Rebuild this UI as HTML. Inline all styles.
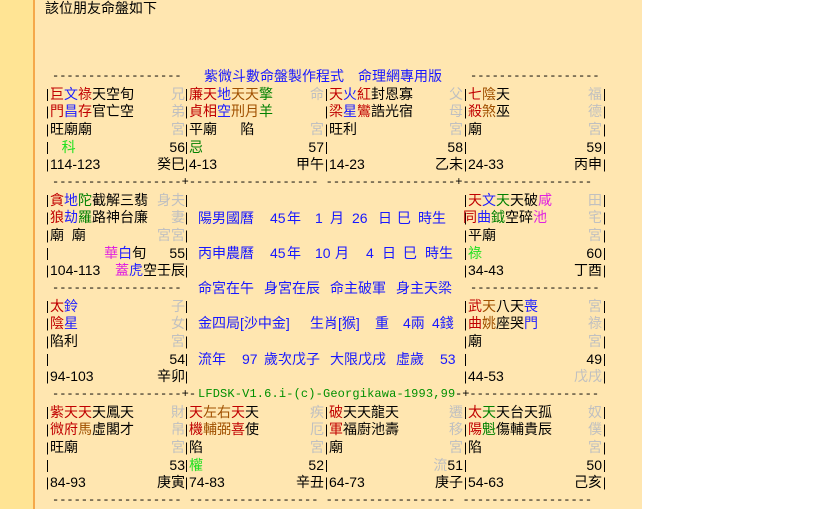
<!DOCTYPE html>
<html><head><meta charset="utf-8">
<style>
html,body{margin:0;padding:0;width:819px;height:509px;overflow:hidden;background:#fff;}
body{position:relative;font-family:"Liberation Sans","Noto Sans CJK TC",sans-serif;font-size:14px;color:#000;}
#strip{position:absolute;left:0;top:0;width:33px;height:509px;background:#FFE494;border-right:2px solid #F5A84A;}
#main{position:absolute;left:35px;top:0;width:607px;height:509px;background:#FFE6B0;}
.a{position:absolute;white-space:pre;line-height:17.67px;height:17.67px;}
.m{font-family:"Liberation Mono",monospace;font-size:12px;}
.cell{position:absolute;}
.cell .l{display:flex;justify-content:space-between;height:17.67px;line-height:17.67px;white-space:pre;}
.bar{position:absolute;width:1px;height:88.35px;background:repeating-linear-gradient(to bottom,transparent 0,transparent 3px,#000 3px,#000 15px,transparent 15px,transparent 17.67px);}
.r{color:#c00000}.b{color:#2020ff}.o{color:#a05000}.g{color:#008000}.lg{color:#20e020}.gy{color:#c0c0c0}.mg{color:#e020e0}
.bl{color:#1818ff}.gr{color:#009000}
</style></head><body>
<div id="strip"></div>
<div id="main"></div>
<div class="a" style="left:45px;top:0px;">該位朋友命盤如下</div>

<div class="a m" style="left:52px;top:68px;">------------------</div>
<div class="a bl" style="left:204px;top:68px;">紫微斗數命盤製作程式</div>
<div class="a bl" style="left:358px;top:68px;">命理網專用版</div>
<div class="a m" style="left:470px;top:68px;">------------------</div>

<div class="a m" style="left:52px;top:174px;">------------------+------------------ ------------------+------------------</div>

<div class="a m" style="left:52px;top:280px;">------------------</div>
<div class="a bl" style="left:198px;top:280px;">命宮在午</div>
<div class="a bl" style="left:264px;top:280px;">身宮在辰</div>
<div class="a bl" style="left:330px;top:280px;">命主破軍</div>
<div class="a bl" style="left:396px;top:280px;">身主天梁</div>
<div class="a m" style="left:470px;top:280px;">------------------</div>

<div class="a m" style="left:52px;top:386px;">------------------+-</div>
<div class="a m gr" style="left:198px;top:386px;letter-spacing:0.15px;">LFDSK-V1.6.i-(c)-Georgikawa-1993,99</div>
<div class="a m" style="left:455px;top:386px;">-+------------------</div>

<div class="a m" style="left:52px;top:492px;">------------------ ------------------ ------------------ ------------------</div>

<div class="a bl" style="left:198px;top:209.7px;">陽男國曆</div>
<div class="a bl" style="left:270px;top:209.7px;">45</div>
<div class="a bl" style="left:287px;top:209.7px;">年</div>
<div class="a bl" style="left:315px;top:209.7px;">1</div>
<div class="a bl" style="left:330px;top:209.7px;">月</div>
<div class="a bl" style="left:352px;top:209.7px;">26</div>
<div class="a bl" style="left:378px;top:209.7px;">日</div>
<div class="a bl" style="left:397px;top:209.7px;">巳</div>
<div class="a bl" style="left:418px;top:209.7px;">時生</div>

<div class="a bl" style="left:198px;top:245px;">丙申農曆</div>
<div class="a bl" style="left:270px;top:245px;">45</div>
<div class="a bl" style="left:287px;top:245px;">年</div>
<div class="a bl" style="left:315px;top:245px;">10</div>
<div class="a bl" style="left:335px;top:245px;">月</div>
<div class="a bl" style="left:366px;top:245px;">4</div>
<div class="a bl" style="left:382px;top:245px;">日</div>
<div class="a bl" style="left:403px;top:245px;">巳</div>
<div class="a bl" style="left:425px;top:245px;">時生</div>

<div class="a bl" style="left:198px;top:315.4px;">金四局[沙中金]</div>
<div class="a bl" style="left:310px;top:315.4px;">生肖[猴]</div>
<div class="a bl" style="left:375px;top:315.4px;">重</div>
<div class="a bl" style="left:403px;top:315.4px;">4兩</div>
<div class="a bl" style="left:432px;top:315.4px;">4錢</div>

<div class="a bl" style="left:198px;top:350.7px;">流年</div>
<div class="a bl" style="left:242px;top:350.7px;">97</div>
<div class="a bl" style="left:264px;top:350.7px;">歲次戊子</div>
<div class="a bl" style="left:330px;top:350.7px;">大限戊戌</div>
<div class="a bl" style="left:396px;top:350.7px;">虛歲</div>
<div class="a bl" style="left:440px;top:350.7px;">53</div>

<div class="bar" style="left:47px;top:85.7px"></div>
<div class="bar" style="left:186px;top:85.7px"></div>
<div class="bar" style="left:326px;top:85.7px"></div>
<div class="bar" style="left:465px;top:85.7px"></div>
<div class="bar" style="left:604px;top:85.7px"></div>
<div class="bar" style="left:47px;top:191.7px"></div>
<div class="bar" style="left:186px;top:191.7px"></div>
<div class="bar" style="left:465px;top:191.7px"></div>
<div class="bar" style="left:604px;top:191.7px"></div>
<div class="bar" style="left:47px;top:297.7px"></div>
<div class="bar" style="left:186px;top:297.7px"></div>
<div class="bar" style="left:465px;top:297.7px"></div>
<div class="bar" style="left:604px;top:297.7px"></div>
<div class="bar" style="left:47px;top:403.7px"></div>
<div class="bar" style="left:186px;top:403.7px"></div>
<div class="bar" style="left:326px;top:403.7px"></div>
<div class="bar" style="left:465px;top:403.7px"></div>
<div class="bar" style="left:604px;top:403.7px"></div>

<div class="cell" style="left:50px;top:85.7px;width:135px;">
<div class="l"><span><span class="r">巨</span><span class="b">文</span><span class="r">祿</span>天空旬</span><span class="gy">兄</span></div>
<div class="l"><span><span class="r">門</span><span class="b">昌</span><span class="r">存</span>官亡空</span><span class="gy">弟</span></div>
<div class="l"><span>旺廟廟</span><span class="gy">宮</span></div>
<div class="l"><span>   <span class="lg">科</span></span><span>56</span></div>
<div class="l"><span>114-123</span><span>癸巳</span></div>
</div>
<div class="cell" style="left:189px;top:85.7px;width:135px;">
<div class="l"><span><span class="r">廉天</span><span class="b">地</span><span class="o">天天</span><span class="g">擎</span></span><span class="gy">命</span></div>
<div class="l"><span><span class="r">貞相</span><span class="b">空</span><span class="o">刑月</span><span class="g">羊</span></span><span></span></div>
<div class="l"><span>平廟      陷</span><span class="gy">宮</span></div>
<div class="l"><span class="g">忌</span><span>57</span></div>
<div class="l"><span>4-13</span><span>甲午</span></div>
</div>
<div class="cell" style="left:329px;top:85.7px;width:134px;">
<div class="l"><span><span class="r">天</span><span class="b">火</span><span class="r">紅</span>封恩寡</span><span class="gy">父</span></div>
<div class="l"><span><span class="r">梁</span><span class="b">星</span><span class="r">鸞</span>誥光宿</span><span class="gy">母</span></div>
<div class="l"><span>旺利</span><span class="gy">宮</span></div>
<div class="l"><span></span><span>58</span></div>
<div class="l"><span>14-23</span><span>乙未</span></div>
</div>
<div class="cell" style="left:468px;top:85.7px;width:134px;">
<div class="l"><span><span class="r">七</span><span class="o">陰</span>天</span><span class="gy">福</span></div>
<div class="l"><span><span class="r">殺</span><span class="o">煞</span>巫</span><span class="gy">德</span></div>
<div class="l"><span>廟</span><span class="gy">宮</span></div>
<div class="l"><span></span><span>59</span></div>
<div class="l"><span>24-33</span><span>丙申</span></div>
</div>

<div class="cell" style="left:50px;top:191.7px;width:135px;">
<div class="l"><span><span class="r">貪</span><span class="b">地</span><span class="g">陀</span>截解三翡</span><span class="gy">身夫</span></div>
<div class="l"><span><span class="r">狼</span><span class="b">劫</span><span class="g">羅</span>路神台廉</span><span class="gy">妻</span></div>
<div class="l"><span>廟  廟</span><span class="gy">宮宮</span></div>
<div class="l"><span></span><span><span class="mg">華</span><span class="b">白</span>旬      55</span></div>
<div class="l"><span>104-113</span><span><span class="mg">蓋</span><span class="b">虎</span>空壬辰</span></div>
</div>
<div class="cell" style="left:468px;top:191.7px;width:134px;">
<div class="l"><span><span class="r">天</span><span class="b">文</span><span class="g">天</span>天破<span class="mg">咸</span></span><span class="gy">田</span></div>
<div class="l" style="margin-left:-5px"><span><span class="r">同</span><span class="b">曲</span><span class="g">鉞</span>空碎<span class="mg">池</span></span><span class="gy">宅</span></div>
<div class="l"><span>平廟</span><span class="gy">宮</span></div>
<div class="l"><span class="lg">祿</span><span>60</span></div>
<div class="l"><span>34-43</span><span>丁酉</span></div>
</div>

<div class="cell" style="left:50px;top:297.7px;width:135px;">
<div class="l"><span><span class="r">太</span><span class="b">鈴</span></span><span class="gy">子</span></div>
<div class="l"><span><span class="r">陰</span><span class="b">星</span></span><span class="gy">女</span></div>
<div class="l"><span>陷利</span><span class="gy">宮</span></div>
<div class="l"><span></span><span>54</span></div>
<div class="l"><span>94-103</span><span>辛卯</span></div>
</div>
<div class="cell" style="left:468px;top:297.7px;width:134px;">
<div class="l"><span><span class="r">武</span><span class="o">天</span>八天<span class="b">喪</span></span><span class="gy">宮</span></div>
<div class="l"><span><span class="r">曲</span><span class="o">姚</span>座哭<span class="b">門</span></span><span class="gy">祿</span></div>
<div class="l"><span>廟</span><span class="gy">宮</span></div>
<div class="l"><span></span><span>49</span></div>
<div class="l"><span>44-53</span><span class="gy">戊戌</span></div>
</div>

<div class="cell" style="left:50px;top:403.7px;width:135px;">
<div class="l"><span><span class="r">紫天天</span>天鳳天</span><span class="gy">財</span></div>
<div class="l"><span><span class="r">微府</span><span class="o">馬</span>虛閣才</span><span class="gy">帛</span></div>
<div class="l"><span>旺廟</span><span class="gy">宮</span></div>
<div class="l"><span></span><span>53</span></div>
<div class="l"><span>84-93</span><span>庚寅</span></div>
</div>
<div class="cell" style="left:189px;top:403.7px;width:135px;">
<div class="l"><span><span class="r">天</span><span class="o">左右</span><span class="r">天</span>天</span><span class="gy">疾</span></div>
<div class="l"><span><span class="r">機</span><span class="o">輔弼</span><span class="r">喜</span>使</span><span class="gy">厄</span></div>
<div class="l"><span>陷</span><span class="gy">宮</span></div>
<div class="l"><span class="lg">權</span><span>52</span></div>
<div class="l"><span>74-83</span><span>辛丑</span></div>
</div>
<div class="cell" style="left:329px;top:403.7px;width:134px;">
<div class="l"><span><span class="r">破</span>天天龍天</span><span class="gy">遷</span></div>
<div class="l"><span><span class="r">軍</span>福廚池壽</span><span class="gy">移</span></div>
<div class="l"><span>廟</span><span class="gy">宮</span></div>
<div class="l"><span></span><span><span class="gy">流</span>51</span></div>
<div class="l"><span>64-73</span><span>庚子</span></div>
</div>
<div class="cell" style="left:468px;top:403.7px;width:134px;">
<div class="l"><span><span class="r">太</span><span class="g">天</span>天台天孤</span><span class="gy">奴</span></div>
<div class="l"><span><span class="r">陽</span><span class="g">魁</span>傷輔貴辰</span><span class="gy">僕</span></div>
<div class="l"><span>陷</span><span class="gy">宮</span></div>
<div class="l"><span></span><span>50</span></div>
<div class="l"><span>54-63</span><span>己亥</span></div>
</div>
</body></html>
